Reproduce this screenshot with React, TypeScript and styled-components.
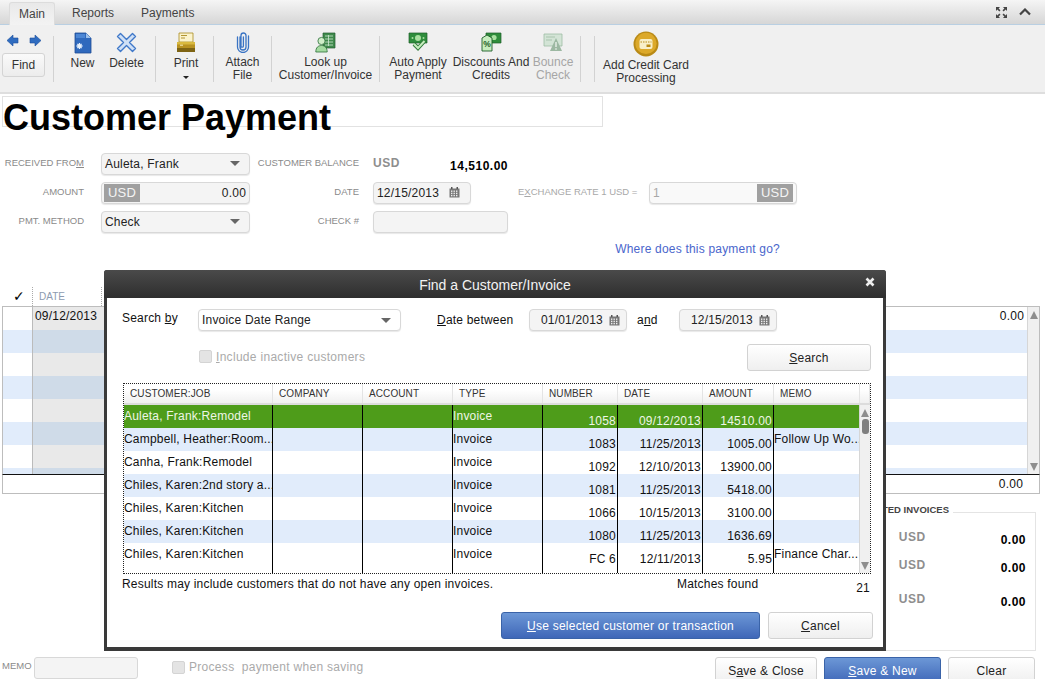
import * as React from 'react';
import styled, { createGlobalStyle } from 'styled-components';

const GlobalStyle = createGlobalStyle`
    html, body {
        margin: 0;
        padding: 0;
        background: #fff;
    }
    body {
        font-family: "Liberation Sans", Arial, sans-serif;
        font-size: 12px;
        color: #111;
    }
    * {
        box-sizing: border-box;
    }
`;

const Page = styled.div`
    position: relative;
    width: 1045px;
    height: 679px;
    overflow: hidden;
    display: flex;
    flex-direction: column;
    background: #fff;
`;

const TabBar = styled.div`
    height: 25px;
    display: flex;
    align-items: flex-end;
    padding-left: 9px;
    background: linear-gradient(#f5f5f5, #d6d6d6);
    border-bottom: 1px solid #b9cfe2;
    position: relative;
`;
const Tab = styled.div<{ $active?: boolean }>`
    height: ${(p) => (p.$active ? '23px' : '22px')};
    width: ${(p) => (p.$active ? '46px' : 'auto')};
    margin-right: ${(p) => (p.$active ? '17px' : '27px')};
    margin-bottom: ${(p) => (p.$active ? '-1px' : '0')};
    display: flex;
    align-items: center;
    justify-content: center;
    color: #444;
    background: ${(p) => (p.$active ? 'linear-gradient(#e9e9e9, #f3f3f3)' : 'transparent')};
    border: ${(p) => (p.$active ? '1px solid #dcdcdc' : 'none')};
    border-bottom: none;
    border-radius: 3px 3px 0 0;
`;
const TabActions = styled.div`
    margin-left: auto;
    height: 23px;
    display: flex;
    align-items: center;
    gap: 11px;
    padding-right: 14px;
`;

const Toolbar = styled.div`
    height: 69px;
    display: flex;
    background: #f0f0f0;
    border-bottom: 2px solid #dedede;
    padding-top: 11px;
`;
const Section = styled.div<{ $w: number; $shift?: number; $plain?: boolean }>`
    width: ${(p) => p.$w}px;
    height: 46px;
    flex: none;
    display: flex;
    justify-content: center;
    padding-left: ${(p) => p.$shift || 0}px;
    border-right: ${(p) => (p.$plain ? 'none' : '1px solid #d2d2d2')};
`;
const NavGroup = styled.div`
    display: flex;
    flex-direction: column;
    align-items: center;
    margin-top: -4px;
    padding-right: 6px;
`;
const NavArrows = styled.div`
    display: flex;
    gap: 10px;
    height: 18px;
    align-items: center;
`;
const FindButton = styled.div`
    width: 43px;
    height: 24px;
    margin-top: 3px;
    border: 1px solid #d4d4d4;
    border-radius: 3px;
    background: linear-gradient(#fafafa, #ececec);
    display: flex;
    align-items: center;
    justify-content: center;
    color: #333;
`;
const ToolItem = styled.div<{ $w?: number; $disabled?: boolean }>`
    width: ${(p) => (p.$w ? `${p.$w}px` : 'auto')};
    display: flex;
    flex-direction: column;
    align-items: center;
    text-align: center;
    line-height: 13px;
    white-space: nowrap;
    color: ${(p) => (p.$disabled ? '#a6a6a6' : '#333')};
    margin-top: -5px;
`;
const ToolIcon = styled.div<{ $h?: number }>`
    height: ${(p) => p.$h || 24}px;
    margin-bottom: 2px;
    display: flex;
    align-items: center;
    justify-content: center;
`;
const PrintCaret = styled.div`
    width: 0;
    height: 0;
    margin-top: 6px;
    border-left: 3px solid transparent;
    border-right: 3px solid transparent;
    border-top: 3px solid #222;
`;

const TitleBox = styled.div`
    width: 601px;
    height: 31px;
    margin: 2px 0 0 2px;
    border: 1px solid #e2e2e2;
    font-size: 36px;
    font-weight: 700;
    line-height: 41px;
    color: #000;
    white-space: nowrap;
`;

const Form = styled.div`
    margin-top: 26px;
    display: grid;
    grid-template-columns: 101px 149px 123px 135px 141px 148px;
    grid-auto-rows: 22px;
    row-gap: 7px;
    width: 797px;
`;
const Label = styled.div<{ $faint?: boolean; $left?: boolean }>`
    font-size: 9.5px;
    color: ${(p) => (p.$faint ? '#a8a8a8' : '#8a8a8a')};
    display: flex;
    align-items: center;
    justify-content: ${(p) => (p.$left ? 'flex-start' : 'flex-end')};
    padding: ${(p) => (p.$left ? '0 0 2px 10px' : '0 17px 2px 0')};
    white-space: nowrap;
`;
const SecondLabel = styled(Label)`
    padding-right: 14px;
`;
const Field = styled.div<{ $w?: number; $faint?: boolean; $white?: boolean }>`
    width: ${(p) => (p.$w ? `${p.$w}px` : '100%')};
    height: 22px;
    border: 1px solid #d8d8d8;
    border-radius: 4px;
    background: ${(p) => (p.$faint ? '#f9f9f9' : p.$white ? '#fff' : '#f4f4f4')};
    box-shadow: 0 1px 1px #e8e8e8;
    display: flex;
    align-items: center;
    padding: 0 3px;
    color: ${(p) => (p.$faint ? '#a8a8a8' : '#222')};
    letter-spacing: 0.2px;
`;
const Caret = styled.div`
    margin-left: auto;
    margin-right: 6px;
    width: 0;
    height: 0;
    border-left: 5px solid transparent;
    border-right: 5px solid transparent;
    border-top: 5px solid #666;
`;
const Spacer = styled.div`
    flex: 1;
`;
const Currency = styled.div`
    height: 18px;
    width: 36px;
    margin-left: -1px;
    background: #a0a0a0;
    color: #f4f4f4;
    font-size: 13px;
    display: flex;
    align-items: center;
    justify-content: center;
`;
const BalanceCell = styled.div`
    display: flex;
    justify-content: space-between;
    padding-top: 3px;
`;
const CurrencyText = styled.div`
    color: #8e8e8e;
    font-size: 12px;
    font-weight: 700;
    letter-spacing: 0.5px;
`;
const BoldAmount = styled.div`
    margin-top: 3px;
    color: #000;
    font-size: 12px;
    font-weight: 700;
    letter-spacing: 0.5px;
`;

const LinkRow = styled.div`
    height: 15px;
    margin-top: 9px;
    padding-right: 265px;
    text-align: right;
    color: #4a66cc;
    letter-spacing: 0.2px;
`;

const GridHead = styled.div`
    height: 19px;
    margin: 30px 0 0 2px;
    display: grid;
    grid-template-columns: 30px 69px 1fr;
    font-size: 10px;
    color: #8d9bb0;
`;
const HeadCell = styled.div<{ $sep?: boolean }>`
    display: flex;
    align-items: center;
    padding-left: 6px;
    border-left: ${(p) => (p.$sep ? '1px dotted #aaa' : 'none')};
`;
const Check = styled.div`
    color: #000;
    font-size: 14px;
    padding-left: 11px;
    font-family: "DejaVu Sans", sans-serif;
    line-height: 19px;
`;
const GridBody = styled.div`
    width: 1038px;
    height: 169px;
    margin-left: 2px;
    border: 1px solid #bdbdbd;
    border-bottom: none;
    display: flex;
    overflow: hidden;
`;
const GridRows = styled.div`
    flex: 1;
`;
const GridRow = styled.div<{ $alt: boolean }>`
    height: 23px;
    display: grid;
    grid-template-columns: 29px 110px 1fr 60px;
    background: ${(p) => (p.$alt ? '#e1ecfb' : '#fff')};
`;
const DateCell = styled.div<{ $alt: boolean }>`
    background: ${(p) => (p.$alt ? '#cfdbe8' : '#e9e9e9')};
    border-left: 1px solid #bbb;
    padding: 2px 0 0 2px;
    letter-spacing: 0.2px;
`;
const AmountCell = styled.div`
    text-align: right;
    padding: 2px 3px 0 0;
    letter-spacing: 0.2px;
`;
const ScrollTrack = styled.div<{ $w: number }>`
    width: ${(p) => p.$w}px;
    flex: none;
    background: #f0f0f0;
    border-left: 1px solid #d6d6d6;
    display: flex;
    flex-direction: column;
    align-items: center;
    padding: 2px 0;
    position: relative;
`;
const ScrollArrow = styled.div<{ $down?: boolean }>`
    width: 0;
    height: 0;
    flex: none;
    border-left: 4px solid transparent;
    border-right: 4px solid transparent;
    border-bottom: ${(p) => (p.$down ? 'none' : '8px solid #8e8e8e')};
    border-top: ${(p) => (p.$down ? '8px solid #8e8e8e' : 'none')};
    margin-top: ${(p) => (p.$down ? 'auto' : '2px')};
    margin-bottom: ${(p) => (p.$down ? '1px' : '0')};
`;
const ScrollThumb = styled.div`
    width: 7px;
    height: 15px;
    margin-top: 2px;
    border-radius: 3px;
    background: #808080;
`;
const TotalRow = styled.div`
    width: 1038px;
    height: 20px;
    margin-left: 2px;
    border: 1px solid #bdbdbd;
    border-top: 1px solid #111;
    text-align: right;
    padding: 2px 16px 0 0;
    letter-spacing: 0.2px;
`;

const LowerArea = styled.div`
    height: 163px;
    display: flex;
    justify-content: flex-end;
    padding: 18px 9px 6px 0;
`;
const AmountsPanel = styled.div`
    width: 340px;
    border: 1px solid #e4e4e4;
    position: relative;
    padding: 17px 9px 0 0;
    display: flex;
    flex-direction: column;
`;
const PanelLegend = styled.div`
    position: absolute;
    top: -9px;
    right: 82px;
    padding: 0 4px;
    background: #fff;
    font-size: 9.5px;
    font-weight: 700;
    color: #444;
    white-space: nowrap;
`;
const PanelRow = styled.div<{ $h: number }>`
    height: ${(p) => p.$h}px;
    display: flex;
    justify-content: flex-end;
    gap: 75px;
`;

const BottomBar = styled.div`
    height: 22px;
    display: flex;
    align-items: flex-start;
    position: relative;
`;
const MemoLabel = styled.div`
    width: 34px;
    font-size: 9.5px;
    color: #8a8a8a;
    padding: 3px 0 0 2px;
`;
const MemoInput = styled.div`
    width: 104px;
    height: 22px;
    border: 1px solid #d8d8d8;
    border-radius: 3px;
    background: #f4f4f4;
`;
const CheckRow = styled.div<{ $ml?: number }>`
    display: flex;
    align-items: center;
    gap: 4px;
    margin-left: ${(p) => p.$ml || 0}px;
    color: #aaa;
    letter-spacing: 0.3px;
    white-space: pre;
`;
const Checkbox = styled.div`
    width: 13px;
    height: 13px;
    border: 1px solid #d4d4d4;
    border-radius: 2px;
    background: #e4e4e4;
`;
const ProcessRow = styled(CheckRow)`
    height: 20px;
`;
const ButtonGroup = styled.div`
    margin-left: auto;
    padding-right: 10px;
    display: flex;
    gap: 7px;
`;
const Button = styled.div<{ $w: number; $primary?: boolean; $h?: number }>`
    width: ${(p) => p.$w}px;
    height: ${(p) => p.$h || 27}px;
    flex: none;
    display: flex;
    align-items: center;
    justify-content: center;
    border: 1px solid ${(p) => (p.$primary ? '#3a63a8' : '#d2d2d2')};
    border-radius: 3px;
    letter-spacing: 0.25px;
    color: ${(p) => (p.$primary ? '#fff' : '#222')};
    background: ${(p) => (p.$primary ? 'linear-gradient(#6c97d6, #3f67b8)' : 'linear-gradient(#fff, #efefef)')};
`;

const Modal = styled.div`
    position: absolute;
    left: 104px;
    top: 270px;
    width: 782px;
    height: 381px;
    background: #3a3a3a;
    border-radius: 3px 3px 0 0;
    padding: 0 3px 4px;
    display: flex;
    flex-direction: column;
`;
const ModalTitle = styled.div`
    height: 28px;
    flex: none;
    margin: 0 -3px;
    background: linear-gradient(#4a4a4a, #2e2e2e);
    border-radius: 3px 3px 0 0;
    color: #f2f2f2;
    font-size: 14px;
    display: flex;
    align-items: center;
    justify-content: center;
    position: relative;
    padding-top: 2px;
`;
const CloseIcon = styled.div`
    position: absolute;
    right: 11px;
    top: 7px;
    display: flex;
`;
const ModalBody = styled.div`
    flex: 1;
    background: #fff;
    padding: 11px 12px 0 15px;
    display: flex;
    flex-direction: column;
`;
const SearchRow = styled.div`
    height: 22px;
    display: flex;
    align-items: center;
    letter-spacing: 0.2px;
    white-space: nowrap;
`;
const SearchLabel = styled.div<{ $w: number; $ml?: number; $dy?: number }>`
    width: ${(p) => p.$w}px;
    margin-left: ${(p) => p.$ml || 0}px;
    transform: translateY(${(p) => p.$dy || 0}px);
`;
const DateField = styled(Field)`
    justify-content: flex-end;
    padding: 0 6px 0 0;
    gap: 6px;
`;
const OptionRow = styled.div`
    height: 27px;
    margin-top: 13px;
    display: flex;
    align-items: center;
    justify-content: space-between;
`;
const OptionCheck = styled(CheckRow)`
    padding-bottom: 2px;
`;
const ResultTable = styled.div`
    width: 748px;
    height: 191px;
    margin: 12px 0 0 1px;
    border: 1px dotted #222;
    display: flex;
    flex-direction: column;
    overflow: hidden;
`;
const ResultHead = styled.div`
    height: 21px;
    flex: none;
    display: grid;
    grid-template-columns: 149px 90px 90px 90px 75px 85px 71px 86px 1fr;
    background: linear-gradient(#fff 30%, #f0f0f0);
    border-bottom: 2px solid #dcdcdc;
    font-size: 10px;
    color: #333;
`;
const ResultHeadCell = styled.div`
    display: flex;
    align-items: center;
    padding-left: 6px;
    border-right: 1px solid #e4e4e4;
    letter-spacing: 0.1px;
`;
const ResultMain = styled.div`
    flex: 1;
    display: flex;
    min-height: 0;
`;
const ResultRows = styled.div`
    flex: 1;
    min-width: 0;
`;
const ResultRow = styled.div<{ $alt: boolean; $sel: boolean }>`
    height: 23px;
    display: grid;
    grid-template-columns: 149px 90px 90px 90px 75px 85px 71px 1fr;
    background: ${(p) => (p.$sel ? '#4e9c1a' : p.$alt ? '#e1ecfb' : '#fff')};
    color: ${(p) => (p.$sel ? '#eef6e6' : '#111')};
    letter-spacing: 0.2px;
`;
const ResultCell = styled.div<{ $num?: boolean; $last?: boolean }>`
    height: 30px;
    padding: ${(p) => (p.$num ? '9px 1px 0 0' : '4px 0 0 0')};
    text-align: ${(p) => (p.$num ? 'right' : 'left')};
    border-right: ${(p) => (p.$last ? 'none' : '1px solid #000')};
    white-space: nowrap;
    overflow: hidden;
`;
const FootRow = styled.div`
    height: 20px;
    margin-top: 3px;
    display: flex;
    letter-spacing: 0.2px;
`;
const FootNote = styled.div`
    width: 555px;
`;
const FootCount = styled.div`
    margin-left: auto;
    padding: 4px 1px 0 0;
`;
const ModalActions = styled.div`
    margin-top: 15px;
    display: flex;
    justify-content: flex-end;
    gap: 8px;
    margin-right: -2px;
`;

const Under = styled.span`
    text-decoration: underline;
`;

const CalendarIcon = () => (
    <svg width="11" height="11" viewBox="0 0 11 11">
        <rect x="0.5" y="1.5" width="10" height="9" fill="#777" />
        <rect x="2" y="0" width="1.5" height="2" fill="#555" />
        <rect x="7.5" y="0" width="1.5" height="2" fill="#555" />
        {[2, 4.5, 7].map((x) =>
            [3.5, 5.7, 7.9].map((y) => <rect key={`${x}-${y}`} x={x} y={y} width="1.4" height="1.4" fill="#eee" />),
        )}
    </svg>
);

const ArrowIcon = ({ right }: { right?: boolean }) => (
    <svg width="13" height="13" viewBox="0 0 13 13">
        <path
            d={right ? 'M1 4h5V1l6 5.5L6 12V9H1z' : 'M12 4H7V1L1 6.5 7 12V9h5z'}
            fill="#2f6cc0"
            stroke="#1d4f9a"
            strokeWidth="0.6"
        />
    </svg>
);

const NewIcon = () => (
    <svg width="18" height="22" viewBox="0 0 18 22">
        <path d="M1 1h11l5 5v15H1z" fill="#2f69bd" stroke="#1f4d94" strokeWidth="0.8" />
        <path d="M12 1l5 5h-5z" fill="#9dc0ea" />
        <path d="M2 2h9v4H2z" fill="#4c86d4" />
        <path
            d="M5.5 11v6M2.5 14h6M3.4 11.9l4.2 4.2M7.6 11.9l-4.2 4.2"
            stroke="#e6f0fb"
            strokeWidth="1.3"
        />
    </svg>
);

const DeleteIcon = () => (
    <svg width="21" height="21" viewBox="0 0 21 21">
        <path
            d="M1.5 4.5l3-3 6 6 6-6 3 3-6 6 6 6-3 3-6-6-6 6-3-3 6-6z"
            fill="#cfe0f6"
            stroke="#3f78c9"
            strokeWidth="1.4"
            strokeLinejoin="round"
        />
    </svg>
);

const PrintIcon = () => (
    <svg width="20" height="21" viewBox="0 0 20 21">
        <path d="M3 1h14v9H3z" fill="#fbf3cc" stroke="#a98a1f" strokeWidth="0.8" />
        <path d="M5 3.5h6M5 6h4" stroke="#a98a1f" strokeWidth="0.9" />
        <path d="M1 10h18v6H1z" fill="#b89222" />
        <path d="M1 10h18v2.5H1z" fill="#d9b93f" />
        <path d="M1 16h18v4H1z" fill="#7e6414" />
        <path d="M4 13.2h3" stroke="#f6eebb" strokeWidth="1" />
    </svg>
);

const ClipIcon = () => (
    <svg width="14" height="22" viewBox="0 0 14 22">
        <path
            d="M4 6v10a3 3 0 0 0 6 0V4.5a2.5 2.5 0 0 0-5 0V15a1.2 1.2 0 0 0 2.4 0V6M1.5 6v10a5.5 5.5 0 0 0 11 0V5"
            fill="none"
            stroke="#3a74c4"
            strokeWidth="1.3"
            strokeLinecap="round"
        />
    </svg>
);

const LookupIcon = () => (
    <svg width="21" height="21" viewBox="0 0 21 21">
        <path d="M8 1h12v15H8z" fill="#3f8a4c" stroke="#245c30" strokeWidth="0.7" />
        <path d="M10 4h8M10 7h8M10 10h8M10 13h8M13.5 3v11" stroke="#cfe8d2" strokeWidth="0.8" />
        <circle cx="6.5" cy="9" r="3.6" fill="#cfeec8" stroke="#2c6e38" strokeWidth="0.8" />
        <path d="M0.8 20c0-4.5 2.4-6.5 5.7-6.5s5.7 2 5.7 6.5z" fill="#a4dba0" stroke="#2c6e38" strokeWidth="0.8" />
    </svg>
);

const AutoApplyIcon = () => (
    <svg width="20" height="20" viewBox="0 0 20 20">
        <path d="M1 1h18v10H1z" fill="#2f8d3c" stroke="#1e5e29" strokeWidth="0.7" />
        <circle cx="10" cy="6" r="3" fill="#a9e0a0" />
        <circle cx="4.5" cy="6" r="1" fill="#a9e0a0" />
        <circle cx="15.5" cy="6" r="1" fill="#a9e0a0" />
        <path d="M6 12l4 4 6.5-7" fill="none" stroke="#2f7a39" strokeWidth="4" />
        <path d="M6 12l4 4 6.5-7" fill="none" stroke="#c6edbe" strokeWidth="2" />
    </svg>
);

const DiscountIcon = () => (
    <svg width="21" height="20" viewBox="0 0 21 20">
        <path d="M5 1h15v10H5z" fill="#2f8d3c" stroke="#1e5e29" strokeWidth="0.7" />
        <circle cx="13" cy="5.5" r="2.6" fill="#a9e0a0" />
        <path d="M1 6l5-3 5 3v13H1z" fill="#c6edbe" stroke="#1e5e29" strokeWidth="0.9" />
        <text x="6" y="15" fontSize="8.5" fontWeight="700" textAnchor="middle" fill="#1e5e29">
            %
        </text>
    </svg>
);

const BounceIcon = () => (
    <svg width="20" height="19" viewBox="0 0 20 19">
        <path d="M1 1h18v12H1z" fill="#d3e4d6" stroke="#9fbda5" strokeWidth="0.8" />
        <path d="M3 4h9M3 7h6" stroke="#a9c4ae" strokeWidth="1" />
        <path d="M13 5l6 13H7z" fill="#9cb8a2" />
        <path d="M13 9v5M13 15.2v1.5" stroke="#eef5ef" strokeWidth="1.3" />
    </svg>
);

const CardBadge = () => (
    <svg width="26" height="26" viewBox="0 0 26 26">
        <circle cx="13" cy="13" r="12.5" fill="#b98a16" />
        <circle cx="13" cy="12.4" r="10.6" fill="#dca92a" />
        <rect x="6.5" y="8" width="13" height="10" rx="2" fill="#f8efc9" />
        <path d="M7.5 11h11" stroke="#b98a16" strokeWidth="1" strokeDasharray="1.5 1" />
        <rect x="13.5" y="13.5" width="4" height="2.5" fill="#b98a16" />
    </svg>
);

const ExpandIcon = () => (
    <svg width="13" height="13" viewBox="0 0 13 13">
        <path
            d="M1 1h4L3.6 2.4 5.5 4.3 4.3 5.5 2.4 3.6 1 5zM12 1v4l-1.4-1.4-1.9 1.9-1.2-1.2 1.9-1.9L8 1zM1 12V8l1.4 1.4 1.9-1.9 1.2 1.2-1.9 1.9L5 12zM12 12H8l1.4-1.4-1.9-1.9 1.2-1.2 1.9 1.9L12 8z"
            fill="#444"
        />
    </svg>
);

const CollapseIcon = () => (
    <svg width="12" height="8" viewBox="0 0 12 8">
        <path d="M1 6.5l5-5 5 5" fill="none" stroke="#444" strokeWidth="2.2" />
    </svg>
);

const XIcon = () => (
    <svg width="10" height="10" viewBox="0 0 10 10">
        <path d="M1.5 1.5l7 7M8.5 1.5l-7 7" stroke="#eee" strokeWidth="2.6" />
    </svg>
);

const columns = ['CUSTOMER:JOB', 'COMPANY', 'ACCOUNT', 'TYPE', 'NUMBER', 'DATE', 'AMOUNT', 'MEMO', ''];

const results = [
    { job: 'Auleta, Frank:Remodel', num: '1058', date: '09/12/2013', amount: '14510.00', memo: '' },
    { job: 'Campbell, Heather:Room...', num: '1083', date: '11/25/2013', amount: '1005.00', memo: 'Follow Up Wo...' },
    { job: 'Canha, Frank:Remodel', num: '1092', date: '12/10/2013', amount: '13900.00', memo: '' },
    { job: 'Chiles, Karen:2nd story a...', num: '1081', date: '11/25/2013', amount: '5418.00', memo: '' },
    { job: 'Chiles, Karen:Kitchen', num: '1066', date: '10/15/2013', amount: '3100.00', memo: '' },
    { job: 'Chiles, Karen:Kitchen', num: '1080', date: '11/25/2013', amount: '1636.69', memo: '' },
    { job: 'Chiles, Karen:Kitchen', num: 'FC 6', date: '12/11/2013', amount: '5.95', memo: 'Finance Char...' },
];

const bgRows = [0, 1, 2, 3, 4, 5, 6, 7];

const App = () => {
    return (
        <Page>
            <GlobalStyle />
            <TabBar>
                <Tab $active>Main</Tab>
                <Tab>Reports</Tab>
                <Tab>Payments</Tab>
                <TabActions>
                    <ExpandIcon />
                    <CollapseIcon />
                </TabActions>
            </TabBar>
            <Toolbar>
                <Section $w={54}>
                    <NavGroup>
                        <NavArrows>
                            <ArrowIcon />
                            <ArrowIcon right />
                        </NavArrows>
                        <FindButton>Find</FindButton>
                    </NavGroup>
                </Section>
                <Section $w={102}>
                    <ToolItem $w={44}>
                        <ToolIcon><NewIcon /></ToolIcon>
                        New
                    </ToolItem>
                    <ToolItem $w={44}>
                        <ToolIcon><DeleteIcon /></ToolIcon>
                        Delete
                    </ToolItem>
                </Section>
                <Section $w={58} $shift={3}>
                    <ToolItem>
                        <ToolIcon><PrintIcon /></ToolIcon>
                        Print
                        <PrintCaret />
                    </ToolItem>
                </Section>
                <Section $w={58}>
                    <ToolItem>
                        <ToolIcon><ClipIcon /></ToolIcon>
                        Attach
                        <br />
                        File
                    </ToolItem>
                </Section>
                <Section $w={108}>
                    <ToolItem>
                        <ToolIcon><LookupIcon /></ToolIcon>
                        Look up
                        <br />
                        Customer/Invoice
                    </ToolItem>
                </Section>
                <Section $w={201}>
                    <ToolItem $w={74}>
                        <ToolIcon><AutoApplyIcon /></ToolIcon>
                        Auto Apply
                        <br />
                        Payment
                    </ToolItem>
                    <ToolItem $w={72}>
                        <ToolIcon><DiscountIcon /></ToolIcon>
                        Discounts And
                        <br />
                        Credits
                    </ToolItem>
                    <ToolItem $w={52} $disabled>
                        <ToolIcon><BounceIcon /></ToolIcon>
                        Bounce
                        <br />
                        Check
                    </ToolItem>
                </Section>
                <Section $w={14} />
                <Section $w={102} $plain>
                    <ToolItem>
                        <ToolIcon $h={32}><CardBadge /></ToolIcon>
                        Add Credit Card
                        <br />
                        Processing
                    </ToolItem>
                </Section>
            </Toolbar>

            <TitleBox>Customer Payment</TitleBox>

            <Form>
                <Label>
                    RECEIVED FRO<Under>M</Under>
                </Label>
                <Field>
                    Auleta, Frank
                    <Caret />
                </Field>
                <SecondLabel>CUSTOMER BALANCE</SecondLabel>
                <BalanceCell>
                    <CurrencyText>USD</CurrencyText>
                    <BoldAmount>14,510.00</BoldAmount>
                </BalanceCell>
                <div />
                <div />

                <Label>AMOUNT</Label>
                <Field>
                    <Currency>USD</Currency>
                    <Spacer />
                    0.00
                </Field>
                <SecondLabel>DATE</SecondLabel>
                <Field $w={98}>
                    12/15/2013
                    <Spacer />
                    <CalendarIcon />
                    &nbsp;&nbsp;
                </Field>
                <Label $faint $left>
                    <span>
                        E<Under>X</Under>CHANGE RATE 1 USD =
                    </span>
                </Label>
                <Field $faint>
                    1
                    <Spacer />
                    <Currency>USD</Currency>
                </Field>

                <Label>PMT. METHOD</Label>
                <Field>
                    Check
                    <Caret />
                </Field>
                <SecondLabel>CHECK #</SecondLabel>
                <Field />
            </Form>

            <LinkRow>Where does this payment go?</LinkRow>

            <GridHead>
                <Check>✓</Check>
                <HeadCell $sep>DATE</HeadCell>
                <HeadCell $sep />
            </GridHead>
            <GridBody>
                <GridRows>
                    {bgRows.map((i) => (
                        <GridRow key={i} $alt={i % 2 === 1}>
                            <div />
                            <DateCell $alt={i % 2 === 1}>{i === 0 ? '09/12/2013' : ''}</DateCell>
                            <div />
                            <AmountCell>{i === 0 ? '0.00' : ''}</AmountCell>
                        </GridRow>
                    ))}
                </GridRows>
                <ScrollTrack $w={12}>
                    <ScrollArrow />
                    <ScrollArrow $down />
                </ScrollTrack>
            </GridBody>
            <TotalRow>0.00</TotalRow>

            <LowerArea>
                <AmountsPanel>
                    <PanelLegend>AMOUNTS FOR SELECTED INVOICES</PanelLegend>
                    <PanelRow $h={28}>
                        <CurrencyText>USD</CurrencyText>
                        <BoldAmount>0.00</BoldAmount>
                    </PanelRow>
                    <PanelRow $h={34}>
                        <CurrencyText>USD</CurrencyText>
                        <BoldAmount>0.00</BoldAmount>
                    </PanelRow>
                    <PanelRow $h={28}>
                        <CurrencyText>USD</CurrencyText>
                        <BoldAmount>0.00</BoldAmount>
                    </PanelRow>
                </AmountsPanel>
            </LowerArea>

            <BottomBar>
                <MemoLabel>MEMO</MemoLabel>
                <MemoInput />
                <ProcessRow $ml={34}>
                    <Checkbox />
                    {'Process  payment when saving'}
                </ProcessRow>
                <ButtonGroup>
                    <Button $w={102}>
                        S<Under>a</Under>ve &amp; Close
                    </Button>
                    <Button $w={117} $primary>
                        <span>
                            <Under>S</Under>ave &amp; New
                        </span>
                    </Button>
                    <Button $w={87}>Clear</Button>
                </ButtonGroup>
            </BottomBar>

            <Modal>
                <ModalTitle>
                    Find a Customer/Invoice
                    <CloseIcon>
                        <XIcon />
                    </CloseIcon>
                </ModalTitle>
                <ModalBody>
                    <SearchRow>
                        <SearchLabel $w={76} $dy={-2}>
                            Search <Under>b</Under>y
                        </SearchLabel>
                        <Field $w={203} $white>
                            Invoice Date Range
                            <Caret />
                        </Field>
                        <SearchLabel $w={92} $ml={36}>
                            <Under>D</Under>ate between
                        </SearchLabel>
                        <DateField $w={98}>
                            01/01/2013
                            <CalendarIcon />
                        </DateField>
                        <SearchLabel $w={42} $ml={10}>
                            a<Under>n</Under>d
                        </SearchLabel>
                        <DateField $w={98}>
                            12/15/2013
                            <CalendarIcon />
                        </DateField>
                    </SearchRow>
                    <OptionRow>
                        <OptionCheck $ml={77}>
                            <Checkbox />
                            <span>
                                <Under>I</Under>nclude inactive customers
                            </span>
                        </OptionCheck>
                        <Button $w={124}>
                            <span>
                                <Under>S</Under>earch
                            </span>
                        </Button>
                    </OptionRow>
                    <ResultTable>
                        <ResultHead>
                            {columns.map((c, i) => (
                                <ResultHeadCell key={i}>{c}</ResultHeadCell>
                            ))}
                        </ResultHead>
                        <ResultMain>
                            <ResultRows>
                                {results.map((r, i) => (
                                    <ResultRow key={i} $alt={i % 2 === 1} $sel={i === 0}>
                                        <ResultCell>{r.job}</ResultCell>
                                        <ResultCell />
                                        <ResultCell />
                                        <ResultCell>Invoice</ResultCell>
                                        <ResultCell $num>{r.num}</ResultCell>
                                        <ResultCell $num>{r.date}</ResultCell>
                                        <ResultCell $num>{r.amount}</ResultCell>
                                        <ResultCell $last>{r.memo}</ResultCell>
                                    </ResultRow>
                                ))}
                            </ResultRows>
                            <ScrollTrack $w={11}>
                                <ScrollArrow />
                                <ScrollThumb />
                                <ScrollArrow $down />
                            </ScrollTrack>
                        </ResultMain>
                    </ResultTable>
                    <FootRow>
                        <FootNote>Results may include customers that do not have any open invoices.</FootNote>
                        <div>Matches found</div>
                        <FootCount>21</FootCount>
                    </FootRow>
                    <ModalActions>
                        <Button $w={259} $primary>
                            <span>
                                <Under>U</Under>se selected customer or transaction
                            </span>
                        </Button>
                        <Button $w={105}>
                            <span>
                                <Under>C</Under>ancel
                            </span>
                        </Button>
                    </ModalActions>
                </ModalBody>
            </Modal>
        </Page>
    );
};

export default App;
